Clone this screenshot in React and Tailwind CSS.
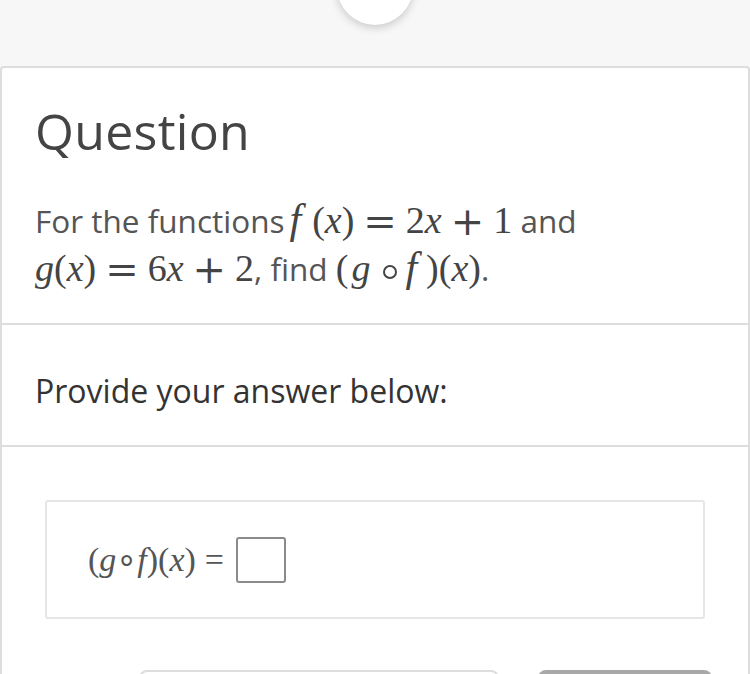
import React from "react";

function M({ children, className = "" }) {
  return (
    <span className={"font-['Liberation_Serif',serif] text-[38px] leading-none text-[#444] " + className}>
      {children}
    </span>
  );
}

function Op({ children }) {
  return (
    <span className="font-['DejaVu_Serif',serif] text-[40px] leading-none mx-[9px] align-[-2px]">
      {children}
    </span>
  );
}

export default function App() {
  return (
    <div className="w-[750px] h-[674px] overflow-hidden bg-[#f7f7f7] font-['Open_Sans',sans-serif]">
      <div className="mx-auto -mt-[51px] w-[76px] h-[76px] rounded-full bg-white shadow-[0_3px_8px_rgba(0,0,0,0.18)]" />
      <div className="mt-[41px] border-2 border-[#dddddd] rounded-[4px] bg-white h-[700px]">
        <div className="px-[33px] pt-[33px] pb-[30px] border-b-2 border-[#dddddd]">
          <h1 className="text-[50px] leading-[60px] text-[#444] tracking-[0.3px]">Question</h1>
          <p className="mt-[36px] text-[31.5px] leading-[48px] text-[#555]">
            For the functions
            <M>
              <i className="ml-[5px] mr-[11px] text-[42px]">f</i>(<i>x</i>)<Op>=</Op>2<i>x</i>
              <Op>+</Op>1
            </M>{" "}
            and
            <br />
            <M>
              <i>g</i>(<i>x</i>)<Op>=</Op>6<i>x</i>
              <Op>+</Op>2
            </M>
            , find{" "}
            <M>
              (<i className="ml-[3px]">g</i>
              <span className="inline-block ml-[13px] mr-[8px] w-[14px] h-[14px] border-2 border-[#444] rounded-full align-[2px]" />
              <i className="mr-[9px] text-[42px]">f</i>)(<i>x</i>)
            </M>
            .
          </p>
        </div>
        <div className="px-[33px] pt-[44px] pb-[32px] border-b-2 border-[#dddddd]">
          <p className="text-[32px] leading-[44px] text-[#333]">Provide your answer below:</p>
        </div>
        <div className="px-[43px] pt-[53px]">
          <div className="h-[119px] border-2 border-[#e6e6e6] rounded-[3px] flex items-center pl-[41px]">
            <span className="font-['Liberation_Serif',serif] text-[34px] leading-none text-[#555]">
              (<i>g</i>∘<i>f</i>)(<i>x</i>)<span className="ml-[9px]">=</span>
            </span>
            <div className="ml-[12px] w-[50px] h-[46px] border-2 border-[#8a8a8a] rounded-[3px]" />
          </div>
        </div>
        <div className="mt-[51px] flex justify-end gap-[39px] pr-[36px]">
          <div className="w-[360px] h-[50px] border-2 border-[#dddddd] rounded-[8px] bg-white" />
          <div className="w-[174px] h-[50px] rounded-[8px] bg-[#a8a8a8]" />
        </div>
      </div>
    </div>
  );
}
